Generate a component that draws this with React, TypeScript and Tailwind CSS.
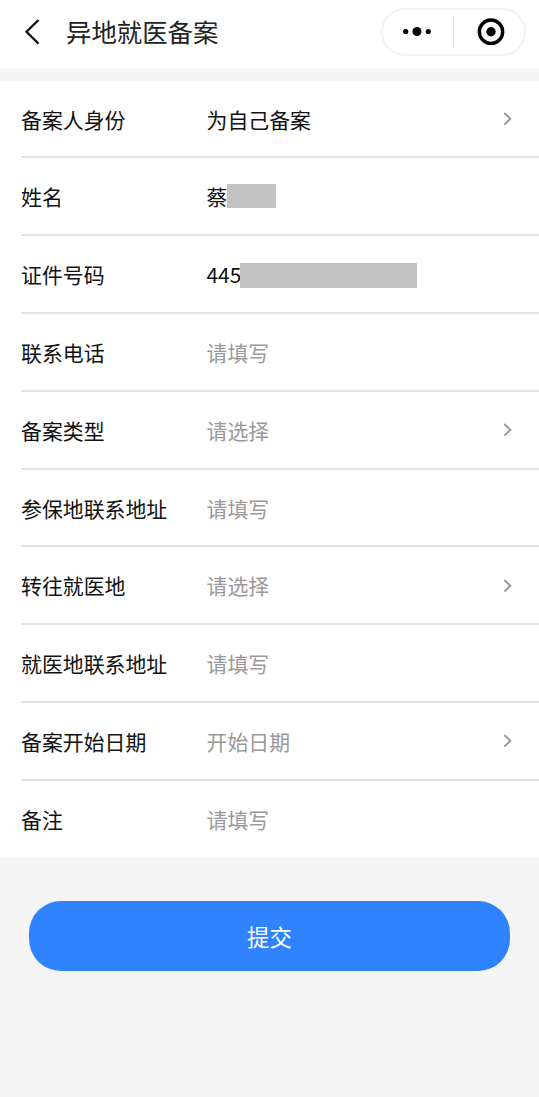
import { clsx } from 'clsx';

type Field = {
  label: string;
  value?: string;
  placeholder?: string;
  select?: boolean;
  maskClass?: string;
};

const fields: Field[] = [
  { label: '备案人身份', value: '为自己备案', select: true },
  { label: '姓名', value: '蔡', maskClass: 'w-[49px] h-6 -mt-[2px]' },
  { label: '证件号码', value: '445', maskClass: 'w-[177px] h-[25px] -ml-px mt-px' },
  { label: '联系电话', placeholder: '请填写' },
  { label: '备案类型', placeholder: '请选择', select: true },
  { label: '参保地联系地址', placeholder: '请填写' },
  { label: '转往就医地', placeholder: '请选择', select: true },
  { label: '就医地联系地址', placeholder: '请填写' },
  { label: '备案开始日期', placeholder: '开始日期', select: true },
  { label: '备注', placeholder: '请填写' },
];

const BackIcon = () => (
  <svg className="w-4 h-7" viewBox="0 0 16 28" fill="none" stroke="#111" strokeWidth="2.3">
    <path d="M14.5 2 L2.5 13.8 L14.5 25.6" />
  </svg>
);

const ChevronIcon = () => (
  <svg className="w-3 h-4" viewBox="0 0 12 16" fill="none" stroke="#999" strokeWidth="2">
    <path d="M2.3 2 L8.3 7.8 L2.3 13.6" />
  </svg>
);

const Capsule = () => (
  <div className="flex items-center w-[145px] h-12 rounded-full border-2 border-[#f3f3f3] bg-white">
    <button className="w-[70px] flex justify-center pr-[3px]" aria-label="更多">
      <svg className="w-[30px] h-3" viewBox="0 0 30 12" fill="#000">
        <circle cx="3.7" cy="5.5" r="2.6" />
        <circle cx="15" cy="5.5" r="4.5" />
        <circle cx="26.3" cy="5.5" r="2.6" />
      </svg>
    </button>
    <div className="w-px h-8 bg-[#e8e8e8]" />
    <button className="flex-1 flex justify-center pl-[3px]" aria-label="关闭">
      <svg className="w-7 h-7" viewBox="0 0 28 28">
        <circle cx="14" cy="13.7" r="11.7" fill="none" stroke="#000" strokeWidth="3.4" />
        <circle cx="14" cy="13.7" r="4.7" fill="#000" />
      </svg>
    </button>
  </div>
);

const FieldRow = ({ field, last }: { field: Field; last: boolean }) => (
  <div
    className={clsx(
      'flex items-center ml-[21px] pr-[25px] text-[20.9px] leading-none',
      last ? 'h-[77.3px]' : 'h-[77.8px] pt-px border-b-2 border-[#e3e3e3]'
    )}
  >
    <span className="w-[185.5px] shrink-0 text-[#111]">{field.label}</span>
    <div className="flex-1 flex items-center">
      <span className={field.value ? 'text-[#111]' : 'text-[#999]'}>
        {field.value ?? field.placeholder}
      </span>
      {field.maskClass && <span className={clsx('bg-[#c3c3c3]', field.maskClass)} />}
    </div>
    {field.select && <ChevronIcon />}
  </div>
);

const App = () => {
  return (
    <div
      className="min-h-screen bg-[#f5f5f6]"
      style={{ fontFamily: '"Noto Sans CJK SC", sans-serif' }}
    >
      {/* Title bar */}
      <header className="flex items-center h-[68px] pl-6 pr-[13px] pb-[5px] bg-white">
        <BackIcon />
        <h1 className="flex-1 ml-[26px] pt-px text-[25.4px] leading-none text-[#222]">异地就医备案</h1>
        <Capsule />
      </header>

      {/* Form */}
      <main className="mt-[12.7px] bg-white">
        {fields.map((field, i) => (
          <FieldRow key={field.label} field={field} last={i === fields.length - 1} />
        ))}
      </main>

      {/* Submit */}
      <div className="pt-[43px] pl-[29px] pr-[29px]">
        <button className="w-full h-[70px] rounded-[32px] bg-[#3083ff] text-[22.4px] leading-none text-white">
          提交
        </button>
      </div>
    </div>
  );
};

export default App;
